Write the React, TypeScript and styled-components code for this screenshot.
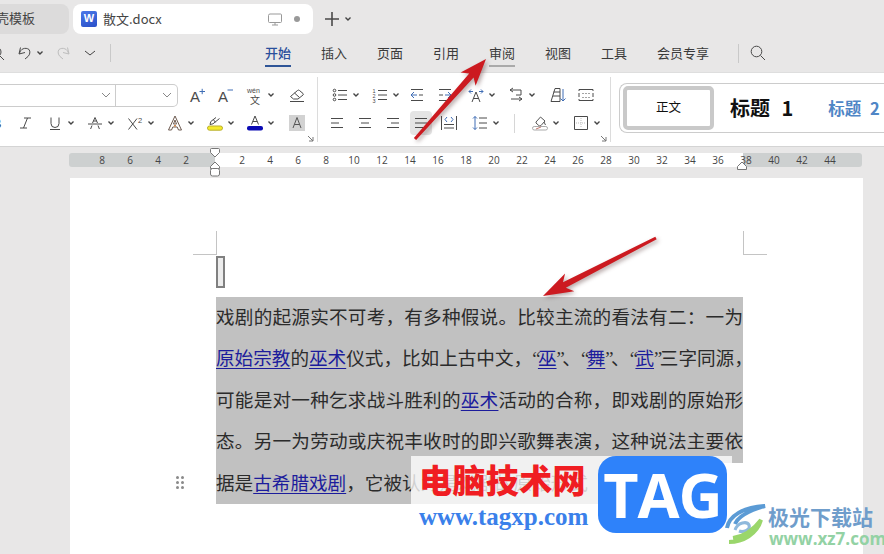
import React from "react";
import styled, { createGlobalStyle } from "styled-components";

const GlobalStyle = createGlobalStyle`
  html, body {
    margin: 0;
    padding: 0;
    background: #e8e7e7;
  }
`;

const UI_FONT = `"Noto Sans CJK SC", "Liberation Sans", sans-serif`;

const Frame = styled.div`
  position: relative;
  width: 884px;
  height: 554px;
  overflow: hidden;
  background: #e8e7e7;
  font-family: ${UI_FONT};
  color: #333;
`;

const TitleBar = styled.div`
  display: flex;
  align-items: center;
  height: 30px;
  padding-top: 4px;
`;

const SideTab = styled.div`
  flex: none;
  width: 99px;
  height: 30px;
  margin-left: -30px;
  box-sizing: border-box;
  padding-right: 34px;
  border-radius: 8px;
  background: #dcdbdb;
  font-size: 13px;
  line-height: 28px;
  text-align: right;
  color: #444;
`;

const DocTab = styled.div`
  flex: none;
  display: flex;
  align-items: center;
  width: 240px;
  height: 30px;
  margin-left: 4px;
  box-sizing: border-box;
  padding: 0 13px 0 8px;
  border-radius: 8px;
  background: #fff;
  font-size: 13px;
  color: #444;
`;

const DocName = styled.span`
  position: relative;
  top: -1px;
`;

const WordBadge = styled.span`
  flex: none;
  width: 16px;
  height: 16px;
  margin-right: 6px;
  border-radius: 2px;
  background: linear-gradient(160deg, #4a78e8, #2a50c8);
  color: #fff;
  font: bold 11px/15px "Liberation Sans", sans-serif;
  text-align: center;
`;

const TabDot = styled.span`
  width: 6px;
  height: 6px;
  margin-left: 11px;
  border-radius: 50%;
  background: #999;
`;

const MenuRow = styled.div`
  display: flex;
  align-items: flex-start;
  height: 38px;
`;

const QuickTools = styled.div`
  flex: none;
  display: flex;
  align-items: center;
  width: 265px;
  height: 38px;
`;

const MenuTabs = styled.div`
  display: flex;
  gap: 30px;
  padding-top: 8px;
`;

const MenuTab = styled.div<{ $active?: boolean; $hover?: boolean }>`
  height: 23px;
  border-bottom: 2px solid ${(p) => (p.$active ? "#2f5597" : p.$hover ? "#aaa" : "transparent")};
  font-size: 13px;
  line-height: 21px;
  font-weight: ${(p) => (p.$active ? 500 : 400)};
  color: ${(p) => (p.$active ? "#2a4f9c" : "#3a3a3a")};
`;

const VSep = styled.span<{ $ml: number; $h: number }>`
  flex: none;
  width: 1px;
  height: ${(p) => p.$h}px;
  margin-left: ${(p) => p.$ml}px;
  background: #c9c9c9;
`;

const SearchSlot = styled.div`
  display: flex;
  align-items: center;
  height: 38px;
`;

const Ribbon = styled.div`
  display: flex;
  height: 75px;
  background: #fff;
  border-top: 1px solid #dedede;
  border-bottom: 1px solid #d4d4d4;
  box-sizing: border-box;
`;

const RibbonGroup = styled.div<{ $w: number }>`
  position: relative;
  flex: none;
  width: ${(p) => p.$w}px;
  box-sizing: border-box;
  margin: 4px 0;
  padding-top: 4px;
  border-right: 1px solid #dcdcdc;
`;

const ToolRow = styled.div`
  display: flex;
  align-items: center;
  height: 28px;
`;

const Tool = styled.span<{ $ml?: number; $on?: boolean }>`
  position: relative;
  flex: none;
  display: inline-flex;
  align-items: center;
  gap: 4px;
  margin-left: ${(p) => p.$ml ?? 0}px;
  ${(p) =>
    p.$on &&
    `
    &::before {
      content: "";
      position: absolute;
      inset: -4px -3px;
      border-radius: 4px;
      background: #e4e4e4;
    }
    & > svg { position: relative; }
  `}
`;

const FontBox = styled.div`
  flex: none;
  display: flex;
  width: 178px;
  height: 23px;
  box-sizing: border-box;
  border: 1px solid #ccc;
  border-left: 0;
  border-radius: 0 5px 5px 0;
`;

const FontField = styled.div<{ $w: number; $pr: number; $line?: boolean }>`
  flex: none;
  display: flex;
  align-items: center;
  justify-content: flex-end;
  width: ${(p) => p.$w}px;
  box-sizing: border-box;
  padding-right: ${(p) => p.$pr}px;
  border-right: ${(p) => (p.$line ? "1px solid #ccc" : "0")};
`;

const Launcher = styled.svg`
  position: absolute;
  right: 3px;
  bottom: 0;
  width: 7px;
  height: 7px;
  fill: none;
  stroke: #777;
`;

const StyleGallery = styled.div`
  flex: none;
  display: flex;
  align-items: center;
  width: 280px;
  height: 50px;
  margin: 10px 0 0 8px;
  padding-left: 3px;
  box-sizing: border-box;
  border: 1px solid #ccc;
  border-right: 0;
  border-radius: 8px 0 0 8px;
  white-space: nowrap;
`;

const BodyStyle = styled.div`
  flex: none;
  width: 91px;
  height: 44px;
  box-sizing: border-box;
  border: 4px solid #c9c9c9;
  border-radius: 5px;
  font-size: 12.5px;
  line-height: 34px;
  text-align: center;
  color: #111;
`;

const HeadingStyle = styled.div<{ $blue?: boolean }>`
  flex: none;
  margin-left: ${(p) => (p.$blue ? 35 : 16)}px;
  font-size: ${(p) => (p.$blue ? 16.5 : 20)}px;
  font-weight: 700;
  line-height: 44px;
  word-spacing: ${(p) => (p.$blue ? 5 : 7)}px;
  color: ${(p) => (p.$blue ? "#4f86c6" : "#111")};
`;

const Workspace = styled.div`
  padding-top: 6px;
`;

const Ruler = styled.div`
  position: relative;
  display: flex;
  width: 793px;
  height: 14px;
  margin: 0 0 11px 69px;
  box-sizing: border-box;
  padding-left: 19px;
  border-radius: 3px;
  background: linear-gradient(
    to right,
    #cdd0d0 146px,
    #fff 146px,
    #fff 674px,
    #cdd0d0 674px
  );
`;

const RulerNum = styled.span`
  flex: none;
  width: 28px;
  font: 10px/14px "Open Sans", sans-serif;
  text-align: center;
  color: #444;
`;

const RulerMark = styled.svg<{ $left: number }>`
  position: absolute;
  left: ${(p) => p.$left}px;
  top: -6px;
  width: 12px;
  height: 30px;
  fill: #fff;
  stroke: #777;
`;

const Page = styled.div`
  width: 793px;
  height: 376px;
  margin-left: 70px;
  box-sizing: border-box;
  padding: 53px 120px 0 146px;
  background: #fff;
`;

const CropRow = styled.div`
  display: flex;
  justify-content: space-between;
  margin: 0 -24px 0 -23px;
`;

const CropMark = styled.div<{ $right?: boolean }>`
  width: 23px;
  height: 23px;
  border-bottom: 1px solid #c4c4c4;
  ${(p) => (p.$right ? "border-left" : "border-right")}: 1px solid #c4c4c4;
`;

const Caret = styled.div`
  width: 9px;
  height: 32px;
  margin: 1px 0 9px;
  box-sizing: border-box;
  border: 2.5px solid #808080;
  background: #ececec;
`;

const TextBlock = styled.div`
  font-family: "Liberation Serif", "Noto Sans CJK SC", serif;
  font-size: 18.6px;
  color: #2b2b2b;
`;

const TextLine = styled.div<{ $short?: boolean }>`
  position: relative;
  width: ${(p) => (p.$short ? "384px" : "auto")};
  height: 41.4px;
  line-height: 41px;
  background: #c1c1c1;
  white-space: nowrap;
  text-align: justify;
  text-align-last: ${(p) => (p.$short ? "left" : "justify")};
`;

const Link = styled.span`
  color: #1c1c9c;
  text-decoration: underline;
  text-underline-offset: 3px;
`;

const Quote = styled.span`
  letter-spacing: -2.5px;
`;

const DragHandle = styled.div`
  position: absolute;
  left: -40px;
  top: 13px;
  display: grid;
  grid-template-columns: 3px 3px;
  grid-auto-rows: 3px;
  gap: 2px;

  span {
    border-radius: 50%;
    background: #8a8a8a;
  }
`;

const ArrowLayer = styled.svg`
  position: absolute;
  left: 0;
  top: 0;
  width: 884px;
  height: 554px;
  fill: #cc1a20;
  filter: drop-shadow(2px 2px 2px rgba(90, 60, 60, 0.45));
  pointer-events: none;
`;

const WatermarkVeil = styled.div`
  position: absolute;
  left: 411px;
  top: 456px;
  width: 321px;
  height: 48px;
  background: rgba(255, 255, 255, 0.78);
`;

const WatermarkTitle = styled.div`
  position: absolute;
  left: 419px;
  top: 457px;
  font-size: 33px;
  line-height: 44px;
  font-weight: 900;
  letter-spacing: 0.4px;
  white-space: nowrap;
  color: #f01d22;
`;

const WatermarkUrl = styled.div`
  position: absolute;
  left: 419px;
  top: 503px;
  font: bold 25px/28px "Liberation Serif", serif;
  white-space: nowrap;
  color: #3a80ea;
`;

const TagLogo = styled.div`
  position: absolute;
  left: 598px;
  top: 456px;
  width: 129px;
  height: 77px;
  border-radius: 18px;
  background: #2e82fa;
  color: #fff;
  font: 700 61px/77px "Open Sans", sans-serif;
  letter-spacing: -1px;
  text-align: center;
`;

const SwirlLogo = styled.svg`
  position: absolute;
  left: 725px;
  top: 504px;
  width: 42px;
  height: 40px;
  fill: none;
`;

const SiteName = styled.div`
  position: absolute;
  left: 768px;
  top: 505px;
  font-size: 21px;
  line-height: 23px;
  font-weight: 700;
  white-space: nowrap;
  color: #6f9dcb;
`;

const SiteUrl = styled.div`
  position: absolute;
  left: 769px;
  top: 530px;
  font: bold 17px/18px "Open Sans", sans-serif;
  white-space: nowrap;
  color: #93d2a4;
`;

const Svg = styled.svg<{ $w?: number }>`
  flex: none;
  width: ${(p) => p.$w ?? 16}px;
  height: 16px;
  overflow: visible;
  fill: none;
  stroke: #4a4a4a;
  stroke-width: 1;

  text {
    fill: #4a4a4a;
    stroke: none;
    font-family: "Liberation Sans", sans-serif;
  }
  .blue {
    stroke: #3f6db5;
  }
`;

const ChevSvg = styled.svg<{ $w?: number; $c?: string }>`
  flex: none;
  width: ${(p) => p.$w ?? 8}px;
  height: 8px;
  fill: none;
  stroke: ${(p) => p.$c ?? "#444"};
  stroke-width: ${(p) => ((p.$w ?? 8) > 8 ? 1 : 1.4)};
`;

function Chev({ w = 8, c }: { w?: number; c?: string }) {
  return (
    <ChevSvg $w={w} $c={c} viewBox={`0 0 ${w} 8`}>
      <path d={w > 8 ? `M1 2l${w / 2 - 1} 4 ${w / 2 - 1}-4` : "M1.5 2.5L4 5l2.5-2.5"} />
    </ChevSvg>
  );
}

type P = { d: string; blue?: string; children?: React.ReactNode; stroke?: string };
function Ic({ d, blue, children, stroke }: P) {
  return (
    <Svg viewBox="0 0 16 16" style={stroke ? { stroke } : undefined}>
      <path d={d} />
      {blue && <path className="blue" d={blue} />}
      {children}
    </Svg>
  );
}

const lines = {
  left: "M2 3.5h12M2 8h8M2 12.5h12",
  center: "M2 3.5h12M4 8h8M2 12.5h12",
  right: "M2 3.5h12M6 8h8M2 12.5h12",
  justify: "M2 3.5h12M2 8h12M2 12.5h12",
};

const rulerValues = [8, 6, 4, 2, "", ...Array.from({ length: 22 }, (_, i) => (i + 1) * 2)];

const tabs = ["开始", "插入", "页面", "引用", "审阅", "视图", "工具", "会员专享"];

function FontToolsTop() {
  return (
    <ToolRow>
      <FontBox>
        <FontField $w={116} $pr={4} $line>
          <Chev w={10} c="#888" />
        </FontField>
        <FontField $w={61} $pr={5}>
          <Chev w={10} c="#888" />
        </FontField>
      </FontBox>
      <Tool $ml={11}>
        <Ic d="">
          <text x="1" y="15" fontSize="15">A</text>
          <path className="blue" d="M10.5 4.5h5.5M13.2 1.8v5.4" />
        </Ic>
      </Tool>
      <Tool $ml={12}>
        <Ic d="">
          <text x="1" y="15" fontSize="15">A</text>
          <path className="blue" d="M10.5 3h5.5" />
        </Ic>
      </Tool>
      <Tool $ml={14}>
        <Ic d="">
          <text x="0" y="5.5" fontSize="7">wén</text>
          <text x="3" y="16.5" fontSize="10" style={{ fontFamily: UI_FONT }}>文</text>
        </Ic>
        <Chev />
      </Tool>
      <Tool $ml={14}>
        <Ic d="M1.5 9.5L8.5 3.5a1.5 1.5 0 0 1 2 0l3.5 3a1 1 0 0 1 0 1.5L9 12H4.5zM5.5 6l5 4.5M1 14.5h14" />
      </Tool>
    </ToolRow>
  );
}

function FontToolsBottom() {
  return (
    <ToolRow>
      <Tool $ml={-11}>
        <Ic d="">
          <text x="3" y="13" fontSize="13" fontWeight="700">B</text>
        </Ic>
      </Tool>
      <Tool $ml={12}>
        <Ic d="M7 3h7M3 13h7M10.5 3L6.5 13" />
      </Tool>
      <Tool $ml={14}>
        <Ic d="M4 2.5v6a4 4 0 0 0 8 0v-6M3 14.5h10" />
        <Chev />
      </Tool>
      <Tool $ml={12}>
        <Ic d="M8 2.5L5.5 8M8 2.5L10.5 8M6.3 6h3.4M1 9h14M5 10.5l-1.4 3.5M11 10.5l1.4 3.5" />
        <Chev />
      </Tool>
      <Tool $ml={12}>
        <Ic d="M1.5 3.5L10 14.5M10 3.5L1.5 14.5">
          <text x="11" y="8" fontSize="7.5">2</text>
        </Ic>
        <Chev />
      </Tool>
      <Tool $ml={12}>
        <Ic d="M8 1L1.5 15h3l1.3-3h4.4l1.3 3h3zM8 5l-1.5 4h3z" stroke="#6d5a50">
          <path d="M7 10h2v1.5H7z" fill="#d08a50" stroke="none" />
        </Ic>
        <Chev />
      </Tool>
      <Tool $ml={12}>
        <Ic d="M3 9.5l.8-3L9 2.5M3 9.5l3-.7L12.5 3.5M6.5 4.8l2 2.5">
          <rect x="0.5" y="11" width="15" height="4.2" rx="2" fill="#f4ea2a" stroke="#b9ae30" />
        </Ic>
        <Chev />
      </Tool>
      <Tool $ml={12}>
        <Ic d="M8 1L4.5 9.5M8 1l3.5 8.5M5.8 6.5h4.4">
          <rect x="0" y="11" width="16" height="4.4" rx="2" fill="#0a0ab4" stroke="none" />
        </Ic>
        <Chev />
      </Tool>
      <Tool $ml={14}>
        <Svg viewBox="0 0 16 16" style={{ background: "#d2d2d2", stroke: "#555" }}>
          <path d="M8 2.5L4 13M8 2.5L12 13M5.4 9.5h5.2" />
        </Svg>
      </Tool>
    </ToolRow>
  );
}

function ParagraphToolsTop() {
  return (
    <ToolRow>
      <Tool $ml={14}>
        <Ic d="M6 3.5h9M6 8h9M6 12.5h9">
          <circle cx="2.5" cy="3.5" r="1.3" />
          <circle cx="2.5" cy="8" r="1.3" />
          <circle cx="2.5" cy="12.5" r="1.3" />
        </Ic>
        <Chev />
      </Tool>
      <Tool $ml={12}>
        <Ic d="M6 3.5h9M6 8h9M6 12.5h9">
          <text x="0.5" y="5.5" fontSize="5.5">1</text>
          <text x="0.5" y="10.5" fontSize="5.5">2</text>
          <text x="0.5" y="15.5" fontSize="5.5">3</text>
        </Ic>
        <Chev />
      </Tool>
      <Tool $ml={9}>
        <Ic d="M2 2.5h12M2 13.5h12M10 8h4" blue="M8 8H2M5 5L2 8l3 3" />
      </Tool>
      <Tool $ml={12}>
        <Ic d="M2 2.5h12M2 13.5h12M2 8h4" blue="M8 8h6M11 5l3 3-3 3" />
      </Tool>
      <Tool $ml={15}>
        <Ic d="M8 5L4 15M8 5l4 10M5.4 11.5h5.2" blue="M1 4.5h4M3 2.5L1 4.5l2 2M15 4.5h-4M13 2.5l2 2-2 2" />
        <Chev />
      </Tool>
      <Tool $ml={12}>
        <Ic d="M13 3H2M5 1L2 3l3 2M3 12h11M11 10l3 2-3 2M13 3v5H8" />
        <Chev />
      </Tool>
      <Tool $ml={14}>
        <Ic d="M1 14.5h9V1.5H5zM3 9h7M3.5 5h6.5" blue="M13 2v12M10.5 11.5L13 14l2.5-2.5" />
      </Tool>
      <Tool $ml={12}>
        <Ic d="M1 4V2.5h14V4M1 12v1.5h14V12M1 6v4M15 6v4M5 6v1M8 6v1M11 6v1M5 10v1M8 10v1M11 10v1" />
      </Tool>
    </ToolRow>
  );
}

// thin divider between line spacing and shading, sits over the gap
const ParaSep = styled.span`
  position: absolute;
  left: 196px;
  top: 37px;
  width: 1px;
  height: 19px;
  background: #d6d6d6;
`;

function ParagraphToolsBottom() {
  return (
    <ToolRow>
      <Tool $ml={11}>
        <Ic d={lines.left} />
      </Tool>
      <Tool $ml={12}>
        <Ic d={lines.center} />
      </Tool>
      <Tool $ml={12}>
        <Ic d={lines.right} />
      </Tool>
      <Tool $ml={12} $on>
        <Ic d={lines.justify} />
      </Tool>
      <Tool $ml={12}>
        <Ic d="M.5 1v14M15.5 1v14M3 9.5h10M3 13h10" blue="M6 2L4 4.5 6 7M10 2l2 2.5L10 7" />
      </Tool>
      <Tool $ml={15}>
        <Ic d="M7 3h8M7 8h8M7 13h8" blue="M3 1.5v13M1 3.5l2-2 2 2M1 12.5l2 2 2-2" />
        <Chev />
      </Tool>
      <Tool $ml={32}>
        <Ic d="M4 7l4.5-5 4.5 4-4 4.5a1.5 1.5 0 0 1-2.2 0L4 8zM12 7l1.5 3" stroke="#555">
          <rect x="0.5" y="11.5" width="15" height="3.5" rx="1.7" stroke="#aaa" />
          <path d="M4 14l5-2" stroke="#c47a70" />
        </Ic>
        <Chev />
      </Tool>
      <Tool $ml={13}>
        <Ic d="M1.5 1.5h13v13h-13z">
          <path d="M8 3v10M3 8h10" stroke="#bbb" strokeDasharray="1 1" />
        </Ic>
        <Chev />
      </Tool>
      <ParaSep />
    </ToolRow>
  );
}

export default function App() {
  return (
    <Frame>
      <GlobalStyle />
      <TitleBar>
        <SideTab>壳模板</SideTab>
        <DocTab>
          <WordBadge>W</WordBadge>
          <DocName>散文.docx</DocName>
          <Svg viewBox="0 0 16 16" style={{ marginLeft: "auto", stroke: "#999" }}>
            <path d="M3 3h10.5a1 1 0 0 1 1 1v6.5a1 1 0 0 1-1 1H2.5a1 1 0 0 1-1-1V4.5A1.5 1.5 0 0 1 3 3zM8 11.5v2.5M5 14h6" />
          </Svg>
          <TabDot />
        </DocTab>
        <Tool $ml={11}>
          <Svg viewBox="0 0 16 16" style={{ strokeWidth: 1.6 }}>
            <path d="M8 1v14M1 8h14" />
          </Svg>
          <Chev />
        </Tool>
      </TitleBar>

      <MenuRow>
        <QuickTools>
          <Tool $ml={-11}>
            <Ic d="">
              <circle cx="7" cy="7" r="5" />
              <path d="M11 11l4 4" />
            </Ic>
          </Tool>
          <Tool $ml={11}>
            <Ic d="M4.5 2.5L3 9l6-1.5M3.5 8.5A6 6 0 0 1 13 4.5c1.5 2 1 5-1 7l-3 2.5" />
            <Chev />
          </Tool>
          <Tool $ml={12}>
            <Ic d="M11.5 2.5L13 9 7 7.5M12.5 8.5A6 6 0 0 0 3 4.5c-1.5 2-1 5 1 7l3 2.5" stroke="#bdbdbd" />
          </Tool>
          <Tool $ml={12}>
            <Chev w={12} />
          </Tool>
          <VSep $ml={14} $h={18} />
        </QuickTools>
        <MenuTabs>
          {tabs.map((t, i) => (
            <MenuTab key={t} $active={i === 0} $hover={i === 4}>
              {t}
            </MenuTab>
          ))}
        </MenuTabs>
        <SearchSlot>
          <VSep $ml={29} $h={19} />
          <Tool $ml={11}>
            <Ic d="M10.5 10.5L15 15">
              <circle cx="6.5" cy="6.5" r="5.3" />
            </Ic>
          </Tool>
        </SearchSlot>
      </MenuRow>

      <Ribbon>
        <RibbonGroup $w={318}>
          <FontToolsTop />
          <FontToolsBottom />
          <Launcher viewBox="0 0 7 7">
            <path d="M1 1l5 5M2 6h4V2" />
          </Launcher>
        </RibbonGroup>
        <RibbonGroup $w={293}>
          <ParagraphToolsTop />
          <ParagraphToolsBottom />
          <Launcher viewBox="0 0 7 7">
            <path d="M1 1l5 5M2 6h4V2" />
          </Launcher>
        </RibbonGroup>
        <StyleGallery>
          <BodyStyle>正文</BodyStyle>
          <HeadingStyle>标题 1</HeadingStyle>
          <HeadingStyle $blue>标题 2</HeadingStyle>
        </StyleGallery>
      </Ribbon>

      <Workspace>
        <Ruler>
          {rulerValues.map((v, i) => (
            <RulerNum key={i}>{v}</RulerNum>
          ))}
          <RulerMark $left={140} viewBox="0 0 12 30">
            <path d="M1.5 2.5a1 1 0 0 1 1-1h7a1 1 0 0 1 1 1v3L6 10 1.5 5.5z" />
            <path d="M1.5 19.5L6 15l4.5 4.5v2h-9z" />
            <rect x="1.5" y="21.5" width="9" height="7.5" rx="2" />
          </RulerMark>
          <RulerMark $left={667} viewBox="0 0 12 30">
            <path d="M1.5 19.5L6 15l4.5 4.5v3h-9z" />
          </RulerMark>
        </Ruler>
        <Page>
          <CropRow>
            <CropMark />
            <CropMark $right />
          </CropRow>
          <Caret />
          <TextBlock>
            <TextLine>戏剧的起源实不可考，有多种假说。比较主流的看法有二：一为</TextLine>
            <TextLine>
              <Link>原始宗教</Link>的<Link>巫术</Link>仪式，比如上古中文，<Quote>“</Quote><Link>巫</Link><Quote>”</Quote>、<Quote>“</Quote><Link>舞</Link><Quote>”</Quote>、<Quote>“</Quote><Link>武</Link><Quote>”</Quote>三字同源，
            </TextLine>
            <TextLine>
              可能是对一种乞求战斗胜利的<Link>巫术</Link>活动的合称，即戏剧的原始形
            </TextLine>
            <TextLine>态。另一为劳动或庆祝丰收时的即兴歌舞表演，这种说法主要依</TextLine>
            <TextLine $short>
              <DragHandle>
                <span /><span /><span /><span /><span /><span />
              </DragHandle>
              据是<Link>古希腊戏剧</Link>，它被认为是戏剧的原始形式
            </TextLine>
          </TextBlock>
        </Page>
      </Workspace>

      <ArrowLayer viewBox="0 0 884 554">
        <polygon points="486,59 475.6,85.8 473.6,77.5 416.1,140 413.9,138 469.2,73.5 460.6,72.6" />
        <polygon points="543,296 574.3,291.2 565.8,287.7 656.7,239.3 655.3,236.7 563,282.3 565.1,273.4" />
      </ArrowLayer>

      <WatermarkVeil />
      <WatermarkTitle>电脑技术网</WatermarkTitle>
      <WatermarkUrl>www.tagxp.com</WatermarkUrl>
      <TagLogo>TAG</TagLogo>
      <SwirlLogo viewBox="0 0 42 40">
        <path d="M2 24C4 12 18 3 40 2 26 6 14 11 10 20" stroke="#5b9bd5" strokeWidth="4" />
        <path d="M10 26c3-8 12-9 14-5s-5 8-10 6" stroke="#8fb9dc" strokeWidth="3" />
        <path d="M4 38c14 0 28-8 32-22-6 8-14 16-28 18" stroke="#9ad66b" strokeWidth="4" />
      </SwirlLogo>
      <SiteName>极光下载站</SiteName>
      <SiteUrl>www.xz7.com</SiteUrl>
    </Frame>
  );
}
